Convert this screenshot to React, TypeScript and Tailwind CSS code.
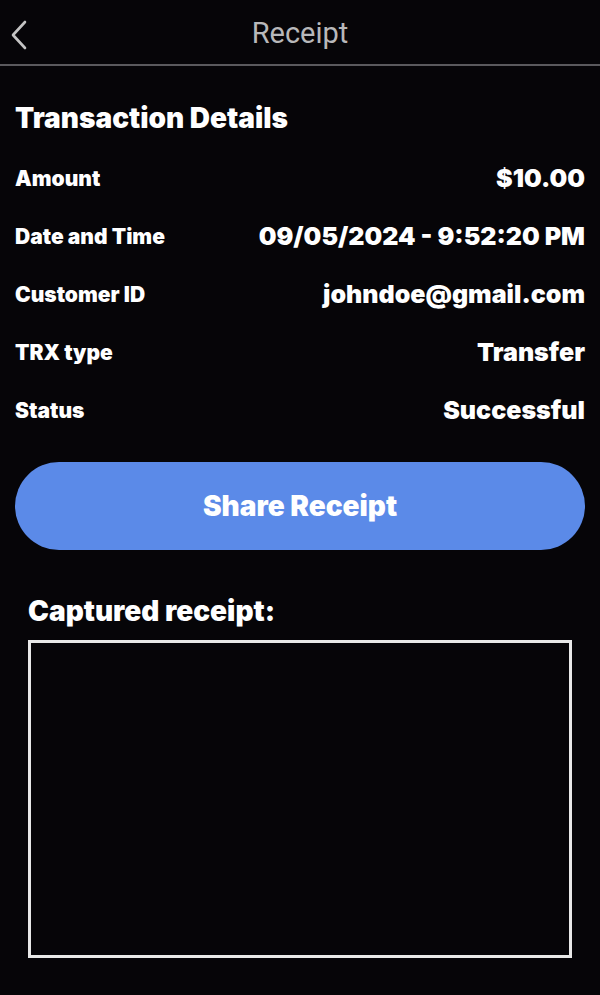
const rows = [
  { label: "Amount", value: "$10.00" },
  { label: "Date and Time", value: "09/05/2024 - 9:52:20 PM" },
  { label: "Customer ID", value: "johndoe@gmail.com" },
  { label: "TRX type", value: "Transfer" },
  { label: "Status", value: "Successful" },
];

export default function App() {
  return (
    <div className="w-[600px] h-[995px] bg-[#060508] text-white font-['Inter',sans-serif] overflow-hidden">
      <header className="relative h-[66px] flex items-center justify-center border-b-2 border-[#5a595d]">
        <svg className="absolute left-[10px] top-[20px]" width="18" height="30" viewBox="0 0 18 30" fill="none">
          <path d="M15 2 L3 15 L15 28" stroke="#c4c4c4" strokeWidth="2.6" strokeLinecap="round" strokeLinejoin="round" />
        </svg>
        <h1 className="mt-[4px] text-[29px] text-[#b8b8ba] font-['Roboto',sans-serif]">Receipt</h1>
      </header>

      <section className="px-[15px] pt-[38px]">
        <h2 className="text-[28px] font-black leading-none">Transaction Details</h2>
        <div className="mt-[35px] flex flex-col gap-[34px]">
          {rows.map((r) => (
            <div key={r.label} className="flex items-center justify-between h-[24px]">
              <span className="text-[21px] font-black">{r.label}</span>
              <span className="text-[25px] font-black">{r.value}</span>
            </div>
          ))}
        </div>

        <button className="mt-[39px] w-full h-[88px] rounded-full bg-[#5b8ae8] text-[28px] font-black text-white">
          Share Receipt
        </button>
      </section>

      <section className="px-[28px] pt-[47px]">
        <h3 className="text-[28px] font-black leading-none">Captured receipt:</h3>
        <div className="mt-[15px] w-[544px] h-[318px] border-[3px] border-[#e8e8e8]" />
      </section>
    </div>
  );
}
